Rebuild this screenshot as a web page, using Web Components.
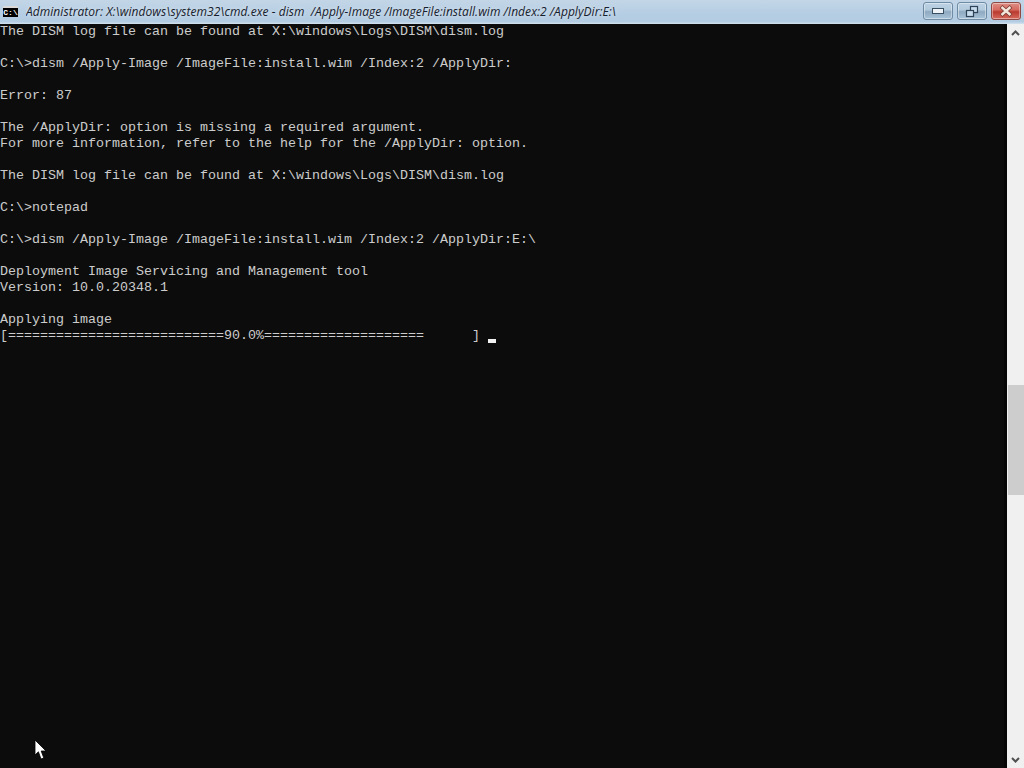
<!DOCTYPE html>
<html>
<head>
<meta charset="utf-8">
<title>cmd</title>
<style>
  html, body { margin: 0; height: 100%; background: #0c0c0c; overflow: hidden; }
</style>
</head>
<body>
<console-window>
  <span slot="title">Administrator: X:\windows\system32\cmd.exe - dism&nbsp; /Apply-Image /ImageFile:install.wim /Index:2 /ApplyDir:E:\</span>
  <console-line>The DISM log file can be found at X:\windows\Logs\DISM\dism.log</console-line>
  <console-line></console-line>
  <console-line>C:\&gt;dism /Apply-Image /ImageFile:install.wim /Index:2 /ApplyDir:</console-line>
  <console-line></console-line>
  <console-line>Error: 87</console-line>
  <console-line></console-line>
  <console-line>The /ApplyDir: option is missing a required argument.</console-line>
  <console-line>For more information, refer to the help for the /ApplyDir: option.</console-line>
  <console-line></console-line>
  <console-line>The DISM log file can be found at X:\windows\Logs\DISM\dism.log</console-line>
  <console-line></console-line>
  <console-line>C:\&gt;notepad</console-line>
  <console-line></console-line>
  <console-line>C:\&gt;dism /Apply-Image /ImageFile:install.wim /Index:2 /ApplyDir:E:\</console-line>
  <console-line></console-line>
  <console-line>Deployment Image Servicing and Management tool</console-line>
  <console-line>Version: 10.0.20348.1</console-line>
  <console-line></console-line>
  <console-line>Applying image</console-line>
  <console-line cursor>[===========================90.0%====================      ] </console-line>
</console-window>
<mouse-pointer></mouse-pointer>

<script>
class ConsoleLine extends HTMLElement {
  constructor() {
    super();
    this.attachShadow({ mode: "open" }).innerHTML = `
      <style>
        :host {
          display: flex;
          height: 16px;
          white-space: pre;
        }
        .cursor {
          display: none;
          width: 8px;
          height: 4px;
          margin-top: 11px;
          background: #f2f2f2;
        }
        :host([cursor]) .cursor { display: block; }
      </style>
      <slot></slot><span class="cursor"></span>
    `;
  }
}

class CaptionButtons extends HTMLElement {
  constructor() {
    super();
    this.attachShadow({ mode: "open" }).innerHTML = `
      <style>
        :host {
          display: flex;
          gap: 4px;
          align-self: flex-start;
          margin: 2px 3px 0 0;
        }
        .btn {
          display: flex;
          align-items: center;
          justify-content: center;
          width: 30px;
          height: 18px;
          box-sizing: border-box;
          border: 1px solid #6f8aa3;
          border-radius: 3px;
          box-shadow: inset 0 0 0 1px rgba(255, 255, 255, 0.4);
          background: linear-gradient(#bdd2e4 0, #b3cadd 42%, #8ea9c0 55%, #aac4da 100%);
        }
        .close {
          border-color: #8d4a44;
          background: linear-gradient(#dd8f86 0, #d66a60 42%, #bb3b30 55%, #d56a5c 100%);
        }
        svg { display: block; }
      </style>
      <div class="btn min">
        <svg width="12" height="6" viewBox="0 0 12 6">
          <rect x="0.5" y="0.5" width="11" height="5" fill="#eef3f8" stroke="#3b4f63"/>
        </svg>
      </div>
      <div class="btn max">
        <svg width="14" height="13" viewBox="0 0 14 13" fill="none">
          <rect x="5.5" y="1.5" width="7" height="6" fill="#c7dced" stroke="#2f4256" stroke-width="1.2"/>
          <rect x="1.5" y="5.5" width="7" height="6" fill="#c7dced" stroke="#2f4256" stroke-width="1.2"/>
        </svg>
      </div>
      <div class="btn close">
        <svg width="14" height="12" viewBox="0 0 14 12">
          <path d="M2 1.5 L12 10.5 M12 1.5 L2 10.5" stroke="#7a3a33" stroke-width="4"/>
          <path d="M2.5 2 L11.5 10 M11.5 2 L2.5 10" stroke="#f3e6da" stroke-width="2.4"/>
        </svg>
      </div>
    `;
  }
}

class ConsoleTitlebar extends HTMLElement {
  constructor() {
    super();
    this.attachShadow({ mode: "open" }).innerHTML = `
      <style>
        :host {
          display: flex;
          align-items: center;
          height: 24px;
          flex: none;
          box-sizing: border-box;
          padding: 0 0 2px 3px;
          background: linear-gradient(#c3d6e7 0, #b6cee3 55%, #b3cce2 90%, #d3e2ef 100%);
          color: #16202c;
        }
        .icon {
          flex: none;
          width: 15px;
          height: 11px;
          box-sizing: border-box;
          margin-right: 8px;
          background: #000;
          border-top: 2px solid #d9d9d9;
          color: #fff;
          font: bold 8px/9px "Liberation Mono", monospace;
          text-align: center;
          overflow: hidden;
        }
        .text {
          flex: 1;
          min-width: 0;
          font: italic 12px "Open Sans", sans-serif;
          letter-spacing: 0.055px;
          text-shadow: 0 0 4px rgba(255, 255, 255, 0.7);
          white-space: nowrap;
          overflow: hidden;
        }
      </style>
      <div class="icon">C:\\</div>
      <div class="text"><slot></slot></div>
      <caption-buttons></caption-buttons>
    `;
  }
}

class ConsoleScrollbar extends HTMLElement {
  constructor() {
    super();
    this.attachShadow({ mode: "open" }).innerHTML = `
      <style>
        :host {
          display: flex;
          flex-direction: column;
          width: 17px;
          flex: none;
          background: #f0f0f0;
        }
        .arrow {
          flex: none;
          height: 17px;
          display: flex;
          align-items: center;
          justify-content: center;
        }
        .track {
          flex: 1;
          padding: 344px 0 0 1px;
        }
        .thumb {
          height: 110px;
          background: #cdcdcd;
        }
        svg { display: block; }
      </style>
      <div class="arrow">
        <svg width="9" height="6" viewBox="0 0 9 6"><path d="M1 5 L4.5 1.5 L8 5" fill="none" stroke="#505050" stroke-width="2"/></svg>
      </div>
      <div class="track"><div class="thumb"></div></div>
      <div class="arrow">
        <svg width="9" height="6" viewBox="0 0 9 6"><path d="M1 1 L4.5 4.5 L8 1" fill="none" stroke="#505050" stroke-width="2"/></svg>
      </div>
    `;
  }
}

class ConsoleWindow extends HTMLElement {
  constructor() {
    super();
    this.attachShadow({ mode: "open" }).innerHTML = `
      <style>
        :host {
          display: flex;
          flex-direction: column;
          width: 1024px;
          height: 768px;
          overflow: hidden;
        }
        .body {
          display: flex;
          flex: 1;
          min-height: 0;
        }
        .screen {
          flex: 1;
          min-width: 0;
          background: #0c0c0c;
          border-right: 3px solid #060606;
          color: #cccccc;
          font: 13.333px/16px "Liberation Mono", monospace;
        }
      </style>
      <console-titlebar><slot name="title"></slot></console-titlebar>
      <div class="body">
        <div class="screen"><slot></slot></div>
        <console-scrollbar></console-scrollbar>
      </div>
    `;
  }
}

// the pointer floats over the console, so it is the one absolute thing here
class MousePointer extends HTMLElement {
  constructor() {
    super();
    this.attachShadow({ mode: "open" }).innerHTML = `
      <style>
        :host {
          position: absolute;
          left: 34px;
          top: 739px;
          display: block;
          width: 14px;
          height: 22px;
        }
        svg { display: block; }
      </style>
      <svg width="14" height="22" viewBox="0 0 14 22">
        <path d="M1 1 L1 16 L4.4 12.8 L7 20 L9.8 19 L7.2 12 L12 12 Z" fill="#fff" stroke="#000" stroke-width="0.8"/>
      </svg>
    `;
  }
}

customElements.define("console-line", ConsoleLine);
customElements.define("caption-buttons", CaptionButtons);
customElements.define("console-titlebar", ConsoleTitlebar);
customElements.define("console-scrollbar", ConsoleScrollbar);
customElements.define("console-window", ConsoleWindow);
customElements.define("mouse-pointer", MousePointer);
</script>
</body>
</html>
